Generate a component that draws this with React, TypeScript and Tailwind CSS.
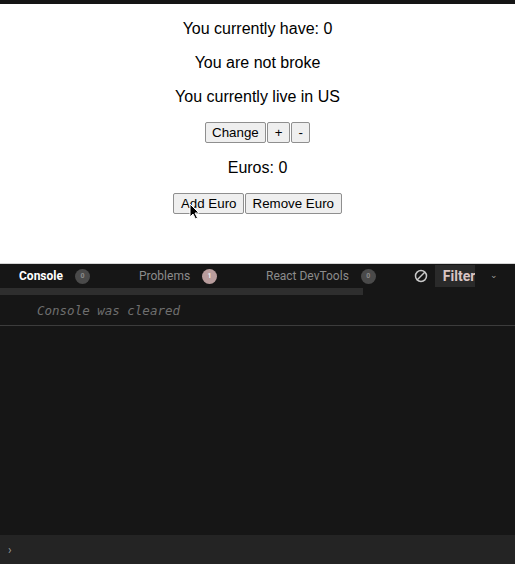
import { useState } from "react";

const btn =
  "h-[21px] bg-[#efefef] border border-[#8f8f8f] rounded-[2px] px-[6.5px] text-[13.33px] leading-[16px] text-black";

function Badge({ n, tone }: { n: number; tone: string }) {
  return (
    <span
      className={`ml-[12px] inline-flex items-center justify-center w-[15px] h-[15px] rounded-full text-[7px] font-bold ${tone}`}
    >
      {n}
    </span>
  );
}

export default function App() {
  const [money, setMoney] = useState(0);
  const [euros, setEuros] = useState(0);
  const [country, setCountry] = useState("US");

  return (
    <div className="w-[515px] h-[564px] flex flex-col bg-[#161616] font-['Liberation_Sans',Arial,sans-serif]">
      <div className="h-[4px] bg-[#151515]" />

      {/* page */}
      <div className="relative h-[260px] bg-white text-center text-[16px] leading-[18px] text-black border-b border-[#d4d4d4]">
        <p className="mt-[16px]">You currently have: {money}</p>
        <p className="mt-[16px]">You are not broke</p>
        <p className="mt-[16px]">You currently live in {country}</p>
        <div className="mt-[16px] flex justify-center gap-[1px]">
          <button className={btn} onClick={() => setCountry(country === "US" ? "EU" : "US")}>
            Change
          </button>
          <button className={btn} onClick={() => setMoney(money + 1)}>
            +
          </button>
          <button className={btn} onClick={() => setMoney(money - 1)}>
            -
          </button>
        </div>
        <p className="mt-[16px]">Euros: {euros}</p>
        <div className="mt-[16px] flex justify-center gap-[1px]">
          <button className={btn} onClick={() => setEuros(euros + 1)}>
            Add Euro
          </button>
          <button className={btn} onClick={() => setEuros(euros - 1)}>
            Remove Euro
          </button>
        </div>

        {/* mouse cursor */}
        <svg
          className="absolute left-[189px] top-[199px]"
          width="11"
          height="17"
          viewBox="0 0 11 17"
        >
          <path
            d="M1 1 L1 14 L4 11 L6.5 16 L8.5 15 L6 10 L10 10 Z"
            fill="#000"
            stroke="#fff"
            strokeWidth="1"
          />
        </svg>
      </div>

      {/* devtools */}
      <div className="flex-1 flex flex-col bg-[#161616] font-['Roboto',sans-serif]">
        <div className="h-[24px] flex items-center text-[12px]">
          <div className="flex items-center ml-[19px] w-[120px] font-bold text-white">
            Console
            <Badge n={0} tone="bg-[#4a4a4a] text-[#8a8a8a]" />
          </div>
          <div className="flex items-center w-[127px] text-[#8c8c8c]">
            Problems
            <Badge n={1} tone="bg-[#b89c9c] text-[#eee]" />
          </div>
          <div className="flex items-center text-[#8c8c8c]">
            React DevTools
            <Badge n={0} tone="bg-[#4a4a4a] text-[#8a8a8a]" />
          </div>
          <svg className="ml-[38px]" width="14" height="14" viewBox="0 0 14 14">
            <circle cx="7" cy="7" r="5.5" fill="none" stroke="#c8c8c8" strokeWidth="1.5" />
            <path d="M3 11 L11 3" stroke="#c8c8c8" strokeWidth="1.5" />
          </svg>
          <div className="ml-[7px] h-[22px] w-[40px] bg-[#2a2a2a] flex items-center pl-[8px] text-[14px] font-bold text-[#d9c4c4] overflow-hidden">
            Filter
          </div>
          <span className="ml-[15px] text-[9px] text-[#9a9a9a]">⌄</span>
        </div>
        <div className="h-[7px] w-[363px] bg-[#2e2e2e]" />
        <div className="h-[31px] flex items-center pl-[37px] pt-[2px] border-b border-[#3c3c3c] font-['DejaVu_Sans_Mono',monospace] italic text-[12.5px] text-[#6f6f6f]">
          Console was cleared
        </div>
        <div className="flex-1" />
        <div className="h-[29px] bg-[#242424] flex items-center pl-[8px] text-[12px] text-[#9a9a9a]">
          ›
        </div>
      </div>
    </div>
  );
}
